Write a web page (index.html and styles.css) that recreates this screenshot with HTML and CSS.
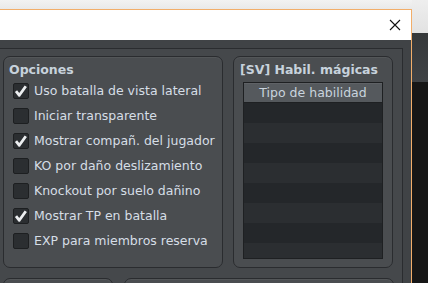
FILE: index.html
```html
<!DOCTYPE html>
<html lang="es">
<head>
    <meta charset="UTF-8">
    <title>Opciones del sistema</title>
    <link rel="stylesheet" href="styles.css">
</head>
<body>
    <div class="screen">
        <div class="top-strip"></div>

        <!-- Ventana de diálogo -->
        <div class="window">
            <div class="titlebar">
                <button class="close-btn" aria-label="Cerrar">
                    <svg width="12" height="12" viewBox="0 0 12 12">
                        <path d="M1 1 L11 11 M11 1 L1 11" stroke="#111" stroke-width="1.1" fill="none"/>
                    </svg>
                </button>
            </div>

            <div class="window-body">
                <div class="frame">
                    <div class="group-row">
                        <!-- Opciones -->
                        <div class="group group-options">
                            <div class="group-title">Opciones</div>
                            <ul class="option-list">
                                <li class="option"><span class="check is-checked"></span>Uso batalla de vista lateral</li>
                                <li class="option"><span class="check"></span>Iniciar transparente</li>
                                <li class="option"><span class="check is-checked"></span>Mostrar compañ. del jugador</li>
                                <li class="option"><span class="check"></span>KO por daño deslizamiento</li>
                                <li class="option"><span class="check"></span>Knockout por suelo dañino</li>
                                <li class="option"><span class="check is-checked"></span>Mostrar TP en batalla</li>
                                <li class="option"><span class="check"></span>EXP para miembros reserva</li>
                            </ul>
                        </div>

                        <!-- Habilidades mágicas -->
                        <div class="group group-skills">
                            <div class="group-title">[SV] Habil. mágicas</div>
                            <div class="list">
                                <div class="list-header">Tipo de habilidad</div>
                                <div class="list-row"></div>
                                <div class="list-row"></div>
                                <div class="list-row"></div>
                                <div class="list-row"></div>
                                <div class="list-row"></div>
                                <div class="list-row"></div>
                                <div class="list-row"></div>
                                <div class="list-row"></div>
                            </div>
                        </div>
                    </div>

                    <div class="group-row">
                        <div class="group group-small"></div>
                        <div class="group group-wide"></div>
                    </div>
                </div>
            </div>
        </div>
    </div>

    <!-- Franja derecha (escritorio detrás) -->
    <div class="side">
        <div class="side-top"></div>
        <div class="side-bar"></div>
        <div class="side-rest"></div>
    </div>
</body>
</html>
```

FILE: styles.css
```css
/* Variables */
:root {
    --accent-border: #f2ae6a;
    --body-bg: #404346;
    --frame-bg: #45484b;
    --group-bg: #4a4d50;
    --line-dark: #2a2c2f;
    --text-color: #d6dee6;
    --title-color: #c7d2dc;
}

/* Base */
body {
    margin: 0;
    height: 283px;
    overflow: hidden;
    display: flex;
    background-color: #161616;
    font-family: "DejaVu Sans", sans-serif;
    font-size: 12.5px;
    color: var(--text-color);
}

.screen {
    width: 412px;
    height: 283px;
    flex-shrink: 0;
    display: flex;
    flex-direction: column;
    overflow: hidden;
}

.top-strip {
    height: 9px;
    flex-shrink: 0;
    background: linear-gradient(#f2f2f2, #e9e9e9);
}

/* Ventana */
.window {
    flex: 1;
    min-height: 0;
    display: flex;
    flex-direction: column;
    border-top: 1px solid var(--accent-border);
    border-right: 1px solid var(--accent-border);
    overflow: hidden;
}

.titlebar {
    height: 30px;
    flex-shrink: 0;
    background-color: #ffffff;
    display: flex;
    justify-content: flex-end;
    align-items: center;
}

.close-btn {
    width: 32px;
    height: 30px;
    padding: 0;
    border: none;
    background: transparent;
    display: flex;
    align-items: center;
    justify-content: center;
}

.window-body {
    flex: 1;
    min-height: 0;
    background-color: var(--body-bg);
    padding: 8px 8px 0 0;
}

.frame {
    height: 100%;
    box-sizing: border-box;
    background-color: var(--frame-bg);
    border-top: 1px solid var(--line-dark);
    border-right: 1px solid var(--line-dark);
    padding: 7px 0 0 3px;
    display: flex;
    flex-direction: column;
    gap: 10px;
    overflow: hidden;
}

.group-row {
    display: flex;
    gap: 10px;
    flex-shrink: 0;
}

/* Cajas de grupo */
.group {
    box-sizing: border-box;
    flex-shrink: 0;
    background-color: var(--group-bg);
    border: 1px solid var(--line-dark);
    border-radius: 7px;
    box-shadow: inset 0 1px 0 rgba(255, 255, 255, 0.05);
}

.group-options {
    width: 220px;
    height: 212px;
    padding: 5px 0 0 5px;
}

.group-skills {
    width: 160px;
    height: 212px;
    padding: 5px 0 0 6px;
}

.group-small {
    width: 110px;
    height: 30px;
}

.group-wide {
    width: 270px;
    height: 30px;
    margin-left: 1px;
}

.group-title {
    font-weight: bold;
    line-height: 16px;
    color: var(--title-color);
    white-space: nowrap;
}

/* Opciones */
.option-list {
    list-style: none;
    margin: 0;
    padding: 0 0 0 4px;
}

.option {
    height: 25px;
    display: flex;
    align-items: center;
    gap: 5px;
    white-space: nowrap;
}

.check {
    width: 16px;
    height: 16px;
    box-sizing: border-box;
    flex-shrink: 0;
    background-color: #2b2e31;
    border: 1px solid #1d1f21;
    border-radius: 2px;
}

.check.is-checked {
    background-image: url("data:image/svg+xml;utf8,<svg xmlns='http://www.w3.org/2000/svg' width='14' height='14' viewBox='0 0 14 14'><path d='M2 7.2 L5.3 11.3 L11.8 2.3' stroke='%23eceef0' stroke-width='2.8' fill='none' stroke-linejoin='round'/></svg>");
    background-repeat: no-repeat;
    background-position: center;
}

/* Lista de tipos */
.list {
    width: 140px;
    height: 177px;
    box-sizing: border-box;
    margin: 4px 0 0 3px;
    border: 1px solid #1e2022;
    overflow: hidden;
}

.list-header {
    height: 19px;
    line-height: 19px;
    text-align: center;
    background-color: #55595d;
    border-bottom: 1px solid #1e2022;
    color: #c9d4de;
    box-shadow: inset 0 1px 0 rgba(255, 255, 255, 0.06);
}

.list-row {
    height: 20px;
    background-color: #24272a;
}

.list-row:nth-child(odd) {
    background-color: #2b2e31;
}

/* Franja lateral */
.side {
    flex: 1;
    display: flex;
    flex-direction: column;
}

.side-top {
    height: 33px;
    flex-shrink: 0;
    background: linear-gradient(#eeeeee, #e2e2e2);
}

.side-bar {
    height: 49px;
    flex-shrink: 0;
    background: linear-gradient(#35383a, #3f4245);
}

.side-rest {
    flex: 1;
    background-color: #161616;
}
```
